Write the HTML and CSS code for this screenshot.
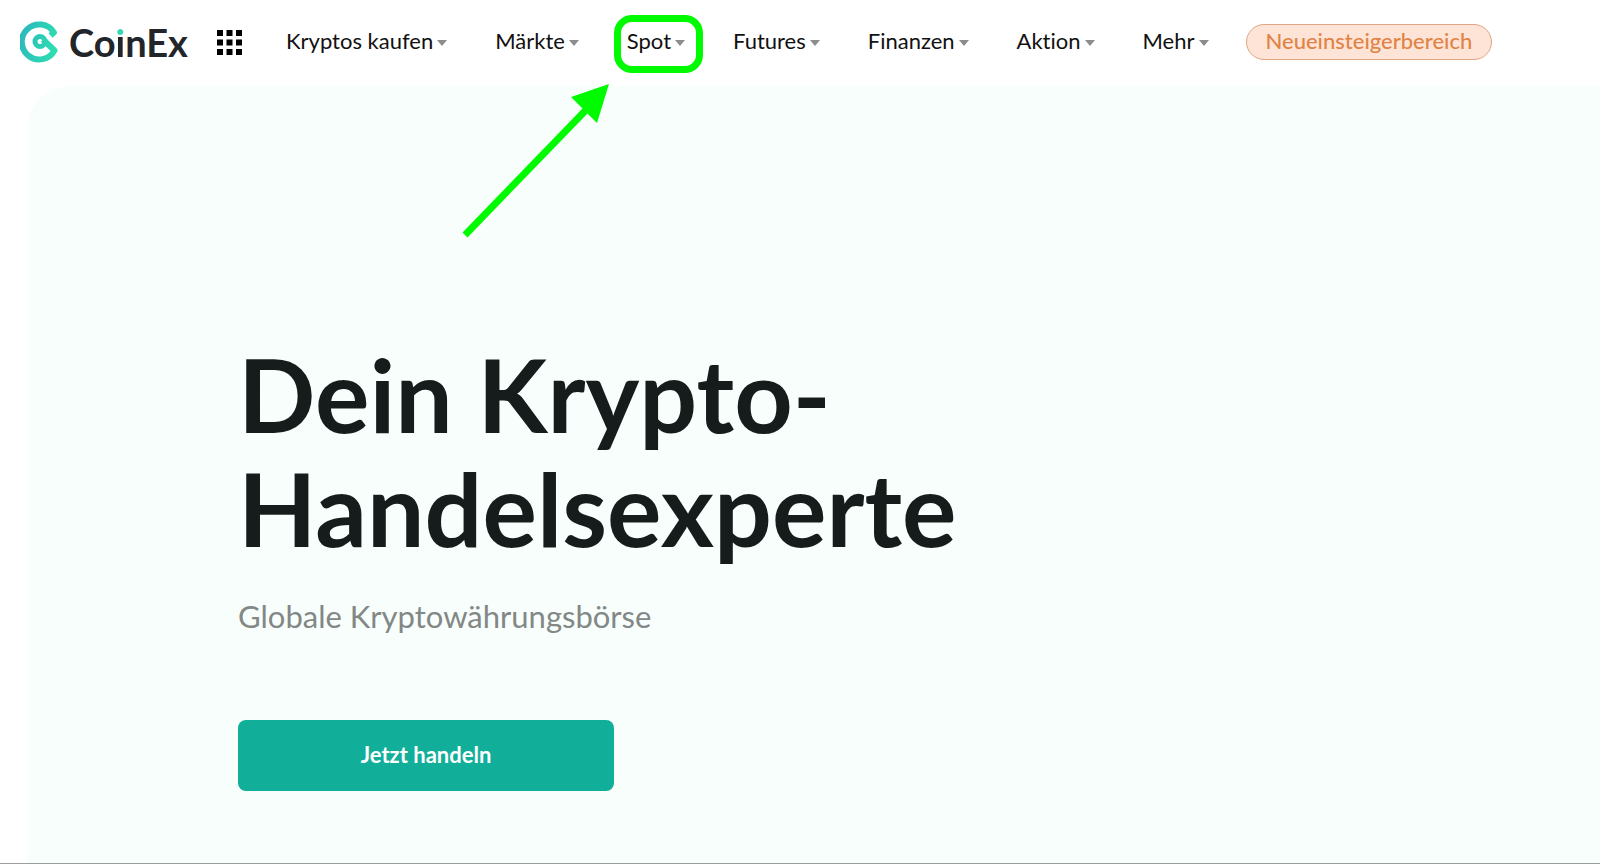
FILE: index.html
```
<!DOCTYPE html>
<html lang="de">
<head>
  <meta charset="UTF-8" />
  <meta name="viewport" content="width=device-width, initial-scale=1.0"/>
  <title>CoinEx</title>
  <link rel="stylesheet" href="styles.css">
</head>
<body>
  <header>
    <a class="logo" href="#">
      <svg class="logo-mark" viewBox="0 0 40 42" aria-hidden="true">
        <defs>
          <linearGradient id="mint" gradientUnits="userSpaceOnUse" x1="0" y1="16" x2="38" y2="26">
            <stop offset="0" stop-color="#2cb9bd"/>
            <stop offset="1" stop-color="#2ee0b0"/>
          </linearGradient>
        </defs>
        <g fill="none" stroke="url(#mint)" stroke-linejoin="round">
          <path d="M30.500 14.500L34 11.500A17.500 17.500 0 1 0 34.500 29.500L23 18.500" stroke-width="6"/>
          <circle cx="20" cy="20.500" r="5" stroke-width="5"/>
        </g>
      </svg>
      <span class="logo-text">Co<span class="logo-i">i</span>nEx</span>
    </a>
    <button class="apps" type="button" aria-label="Apps">
      <svg viewBox="0 0 25 25" aria-hidden="true">
        <path d="M0 0h6v6H0zM9.500 0h6v6h-6zM19 0h6v6h-6zM0 9.500h6v6H0zM9.500 9.500h6v6h-6zM19 9.500h6v6h-6zM0 19h6v6H0zM9.500 19h6v6h-6zM19 19h6v6h-6z"/>
      </svg>
    </button>
    <nav>
      <a href="#">Kryptos kaufen</a>
      <a href="#">Märkte</a>
      <a class="marked" href="#">Spot
        <svg class="arrow" viewBox="0 0 148 154" aria-hidden="true">
          <path class="shaft" d="M3 151L124 26"/>
          <path d="M147 0L135 39L109 13z"/>
        </svg>
      </a>
      <a href="#">Futures</a>
      <a href="#">Finanzen</a>
      <a href="#">Aktion</a>
      <a href="#">Mehr</a>
    </nav>
    <a class="beginner" href="#">Neueinsteigerbereich</a>
  </header>

  <main class="hero">
    <h1>Dein Krypto-<br>Handelsexperte</h1>
    <p>Globale Kryptowährungsbörse</p>
    <button class="trade" type="button">Jetzt handeln</button>
  </main>
</body>
</html>
```
FILE: styles.css
```
* { box-sizing: border-box; }
body {
  margin: 0;
  min-height: 100vh;
  display: flex;
  flex-direction: column;
  font-family: Lato, "Open Sans", sans-serif;
  font-size: 22px;
  color: #111;
  background: #fff;
  border-bottom: 1px solid #9a9f9e;
}
a { color: inherit; text-decoration: none; }
button {
  border: none;
  font-family: inherit;
  cursor: pointer;
}
header {
  height: 86px;
  padding: 0 20px 2px;
  display: flex;
  align-items: center;
  font-variant-ligatures: none;
}
.logo {
  display: flex;
  align-items: center;
  gap: 9px;
}
.logo-mark { width: 40px; height: 42px; }
.logo-text {
  font-size: 38px;
  font-weight: bold;
  line-height: 42px;
  color: #22252a;
}
.logo-i {
  background: linear-gradient(#35d6b4 16px, #22252a 16px);
  -webkit-background-clip: text;
  background-clip: text;
  color: transparent;
}
.apps {
  margin-left: 29px;
  padding: 0;
  background: none;
  line-height: 0;
}
.apps svg { width: 25px; height: 25px; }
nav {
  margin-left: 44px;
  display: flex;
  gap: 48px;
}
nav a {
  position: relative;
  display: flex;
  align-items: center;
  gap: 4px;
  padding-bottom: 2px;
  line-height: 28px;
}
nav a::after {
  content: "";
  margin-top: 4px;
  border: 5px solid transparent;
  border-top: 6px solid #8c8c8c;
  border-bottom: none;
}
/* highlight around the spot menu */
.marked::before {
  content: "";
  position: absolute;
  inset: -12px -18px -16px -13px;
  border: 7px solid #00fa00;
  border-radius: 18px;
}
.arrow {
  position: absolute;
  top: 57px;
  right: 75px;
  width: 148px;
  height: 154px;
  fill: #00fa00;
}
.shaft { stroke: #00fa00; stroke-width: 7; }
.beginner {
  margin-left: 37px;
  padding: 0 19px 2px;
  border: 1px solid #e0a585;
  border-radius: 18px;
  background: #fee3d7;
  color: #e08344;
  font-weight: 500;
  line-height: 32px;
}
.hero {
  flex: 1;
  margin-left: 28px;
  padding: 251px 40px 72px 210px;
  border-top-left-radius: 42px;
  background: #f7fefc;
}
.hero h1 {
  margin: 0;
  font-size: 102px;
  line-height: 114px;
  color: #161c1b;
}
.hero p {
  margin: 27px 0 80px;
  font-size: 31px;
  line-height: 48px;
  color: #838786;
}
.trade {
  width: 376px;
  height: 71px;
  padding-bottom: 3px;
  border-radius: 8px;
  background: #11ae99;
  color: #fff;
  font-size: 22px;
  font-weight: bold;
}
```
